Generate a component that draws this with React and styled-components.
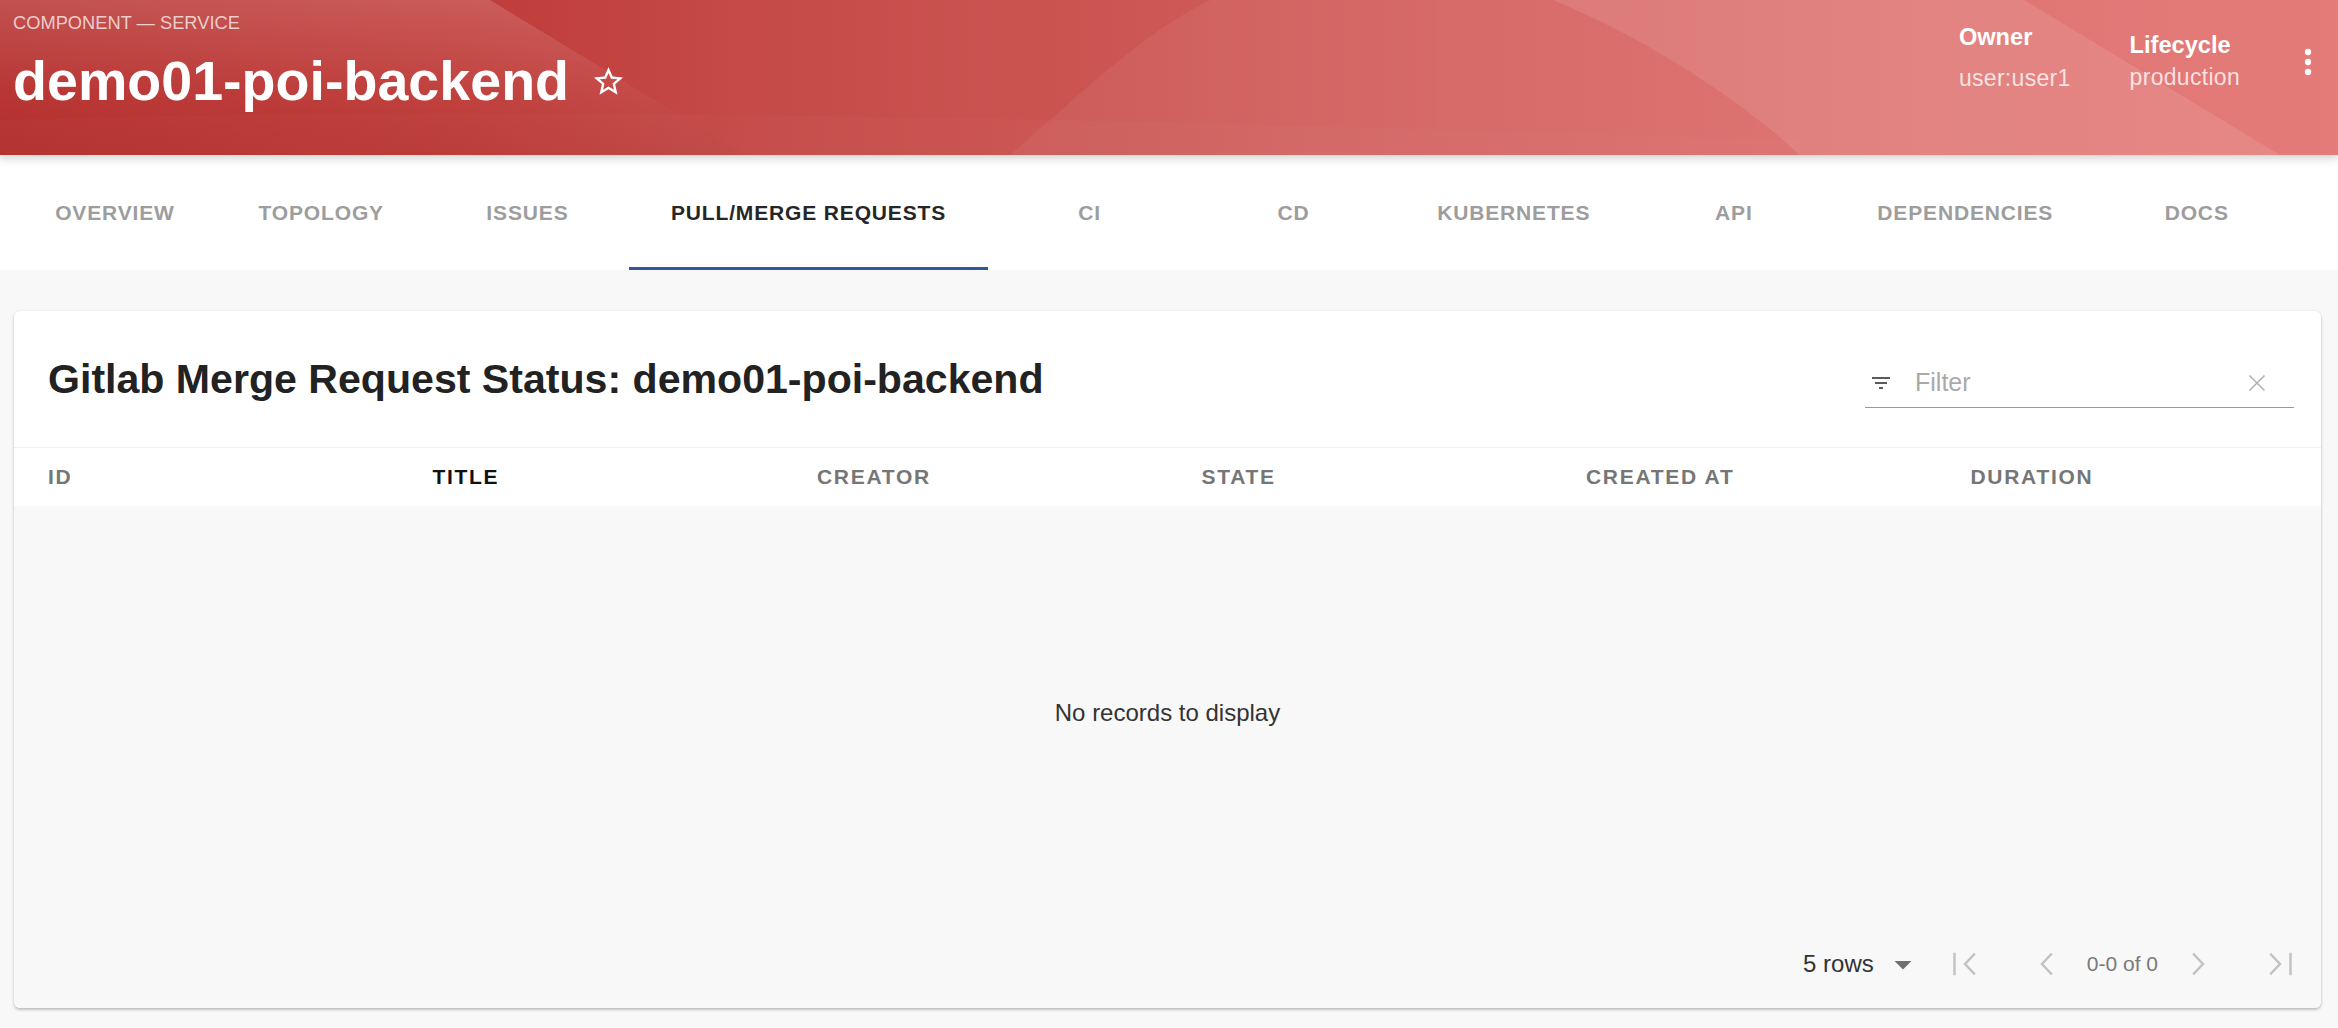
import React from 'react';
import styled, { createGlobalStyle } from 'styled-components';

const GlobalStyle = createGlobalStyle`
  html, body { margin: 0; padding: 0; background: #f8f8f8; }
  body { font-family: "Liberation Sans", Arial, Helvetica, sans-serif; }
  * { box-sizing: border-box; }
`;

const Page = styled.div`
  height: 1028px;
  display: flex;
  flex-direction: column;
  background: #f8f8f8;
  overflow: hidden;
`;

const HeaderBar = styled.header`
  position: relative;
  height: 155px;
  flex: none;
  display: flex;
  align-items: flex-start;
  justify-content: space-between;
  padding: 0 10px 0 13px;
  background: linear-gradient(90deg, #b6302e 0%, #bf3c39 20%, #c54a48 32%, #cc5653 48%, #d4605e 62%, #db6866 80%, #e16d6a 100%);
  box-shadow: 0 0 10px 2px rgba(0, 0, 0, 0.22);
  overflow: hidden;
  z-index: 2;
  color: #fff;
`;

const HeaderArt = styled.svg`
  position: absolute;
  inset: 0;
  width: 100%;
  height: 100%;
  pointer-events: none;
`;

const TitleBlock = styled.div`
  position: relative;
  z-index: 1;
  padding-top: 12px;
`;

const TypeLine = styled.div`
  font-size: 18.3px;
  line-height: 22px;
  color: rgba(255, 255, 255, 0.72);
  text-transform: uppercase;
`;

const TitleRow = styled.div`
  margin-top: 15px;
  display: flex;
  align-items: center;
`;

const Title = styled.h1`
  margin: 0;
  font-size: 55.6px;
  line-height: 64px;
  font-weight: 700;
  color: #fff;
`;

const StarButton = styled.span`
  display: inline-flex;
  margin-left: 22px;
  width: 35px;
  height: 35px;
`;

const MetaRow = styled.div`
  position: relative;
  z-index: 1;
  display: flex;
  align-items: flex-start;
`;

const HeaderLabel = styled.div`
  display: flex;
  flex-direction: column;
  padding-top: ${(p) => p.$top}px;
  margin-right: ${(p) => p.$right}px;
`;

const LabelTitle = styled.span`
  font-size: 23.6px;
  line-height: 27px;
  font-weight: 700;
  color: #fff;
`;

const LabelValue = styled.span`
  margin-top: ${(p) => p.$gap}px;
  font-size: 23px;
  line-height: 27px;
  letter-spacing: 0.3px;
  color: rgba(255, 255, 255, 0.78);
`;

const KebabButton = styled.span`
  display: inline-flex;
  margin-top: 42px;
  margin-left: 48px;
  width: 40px;
  height: 40px;
`;

const TabBar = styled.nav`
  height: 115px;
  flex: none;
  display: flex;
  align-items: stretch;
  padding-left: 13px;
  background: #fff;
`;

const Tab = styled.div`
  position: relative;
  min-width: 204px;
  padding: 0 41.5px;
  display: flex;
  align-items: center;
  justify-content: center;
  font-size: 21px;
  font-weight: 700;
  letter-spacing: 0.85px;
  text-transform: uppercase;
  white-space: nowrap;
  color: ${(p) => (p.$active ? '#262626' : '#9d9d9d')};

  &::after {
    content: '';
    display: ${(p) => (p.$active ? 'block' : 'none')};
    position: absolute;
    left: 0;
    right: 0;
    bottom: 0;
    height: 3px;
    background: #31579a;
  }
`;

const Content = styled.main`
  padding: 41px 17px 0 14px;
`;

const Card = styled.section`
  height: 697px;
  display: flex;
  flex-direction: column;
  background: #fff;
  border-radius: 6px;
  overflow: hidden;
  box-shadow: 0 2px 3px rgba(0, 0, 0, 0.22), 0 0 2px rgba(0, 0, 0, 0.1);
`;

const Toolbar = styled.div`
  height: 136px;
  flex: none;
  display: flex;
  align-items: center;
  justify-content: space-between;
  padding: 0 27px 0 34px;
`;

const CardTitle = styled.h2`
  margin: 0;
  font-size: 41.1px;
  line-height: 48px;
  font-weight: 700;
  color: #222;
`;

const FilterField = styled.label`
  width: 429px;
  height: 50px;
  margin-top: 8px;
  display: flex;
  align-items: center;
  padding: 0 28px 0 4px;
  border-bottom: 1px solid rgba(0, 0, 0, 0.4);
`;

const FilterIconBox = styled.span`
  display: inline-flex;
  width: 24px;
  height: 24px;
  margin-right: 22px;
`;

const FilterInput = styled.input`
  flex: 1;
  min-width: 0;
  border: none;
  outline: none;
  background: transparent;
  font-family: "Liberation Sans", Arial, Helvetica, sans-serif;
  font-size: 25px;
  color: #333;
  padding: 0;

  &::placeholder {
    color: #a9a9a9;
    opacity: 1;
  }
`;

const ClearBox = styled.span`
  display: inline-flex;
  width: 18px;
  height: 18px;
`;

const HeadRow = styled.div`
  height: 59px;
  flex: none;
  display: grid;
  grid-template-columns: repeat(6, 1fr);
  align-items: center;
  border-top: 1px solid #efefef;
  background: #fff;
`;

const HeadCell = styled.div`
  padding-left: 34px;
  font-size: 21px;
  font-weight: 700;
  letter-spacing: 1.7px;
  text-transform: uppercase;
  color: ${(p) => (p.$sorted ? '#111' : '#767676')};
`;

const EmptyBody = styled.div`
  flex: 1;
  display: flex;
  align-items: center;
  justify-content: center;
  background: #f8f8f8;
  font-size: 24px;
  color: #333;
`;

const Footer = styled.div`
  height: 88px;
  flex: none;
  display: flex;
  align-items: center;
  justify-content: flex-end;
  padding-right: 21px;
  background: #f8f8f8;
`;

const RowsSelect = styled.span`
  display: inline-flex;
  align-items: center;
  font-size: 24px;
  color: #333;
`;

const DropArrow = styled.span`
  display: inline-flex;
  width: 30px;
  height: 30px;
  margin-left: 14px;
`;

const PagerButton = styled.span`
  display: inline-flex;
  width: 40px;
  height: 40px;
  margin-left: ${(p) => p.$ml}px;
`;

const PageInfo = styled.span`
  margin: 0 22px;
  font-size: 21px;
  color: #7a7a7a;
`;

const StarIcon = () => (
  <svg viewBox="0 0 24 24" width="35" height="35" fill="#fff">
    <path d="M22 9.24l-7.19-.62L12 2 9.19 8.63 2 9.24l5.46 4.73L5.82 21 12 17.27 18.18 21l-1.63-7.03L22 9.24zM12 15.4l-3.76 2.27 1-4.28-3.32-2.88 4.38-.38L12 6.1l1.71 4.04 4.38.38-3.32 2.88 1 4.28L12 15.4z" />
  </svg>
);

const MoreVertIcon = () => (
  <svg viewBox="0 0 24 24" width="40" height="40" fill="#fff">
    <circle cx="12" cy="6" r="1.9" />
    <circle cx="12" cy="12" r="1.9" />
    <circle cx="12" cy="18" r="1.9" />
  </svg>
);

const FilterListIcon = () => (
  <svg viewBox="0 0 24 24" width="24" height="24" fill="#5a5a5a">
    <path d="M10 18h4v-2h-4v2zM3 6v2h18V6H3zm3 7h12v-2H6v2z" />
  </svg>
);

const ClearIcon = () => (
  <svg viewBox="0 0 18 18" width="18" height="18" fill="none" stroke="#b3b3b3" strokeWidth="1.6">
    <path d="M1.5 1.5L16.5 16.5M16.5 1.5L1.5 16.5" />
  </svg>
);

const ArrowDropDownIcon = () => (
  <svg viewBox="0 0 30 30" width="30" height="30" fill="#707070">
    <path d="M6.5 12h17L15 20.5z" />
  </svg>
);

const pagerStroke = { fill: 'none', stroke: '#c2c2c2', strokeWidth: 2.4, strokeLinecap: 'square' };

const FirstPageIcon = () => (
  <svg viewBox="0 0 40 40" width="40" height="40">
    <path d="M9.5 10v20" {...pagerStroke} />
    <path d="M29 10.5L20 20l9 9.5" {...pagerStroke} />
  </svg>
);

const PrevIcon = () => (
  <svg viewBox="0 0 40 40" width="40" height="40">
    <path d="M26 10.5L17 20l9 9.5" {...pagerStroke} />
  </svg>
);

const NextIcon = () => (
  <svg viewBox="0 0 40 40" width="40" height="40">
    <path d="M14 10.5L23 20l-9 9.5" {...pagerStroke} />
  </svg>
);

const LastPageIcon = () => (
  <svg viewBox="0 0 40 40" width="40" height="40">
    <path d="M11 10.5L20 20l-9 9.5" {...pagerStroke} />
    <path d="M30.5 10v20" {...pagerStroke} />
  </svg>
);

const HeaderShapes = () => (
  <HeaderArt viewBox="0 0 2338 155" preserveAspectRatio="none" aria-hidden="true">
    <defs>
      <linearGradient id="wedge" x1="0" y1="0" x2="0" y2="1">
        <stop offset="0" stopColor="#fff" stopOpacity="0.16" />
        <stop offset="0.6" stopColor="#fff" stopOpacity="0.03" />
        <stop offset="1" stopColor="#000" stopOpacity="0.02" />
      </linearGradient>
      <linearGradient id="band" x1="0" y1="0" x2="1" y2="0">
        <stop offset="0" stopColor="#fff" stopOpacity="0.05" />
        <stop offset="1" stopColor="#fff" stopOpacity="0.1" />
      </linearGradient>
    </defs>
    <path d="M0 0H490L745 155H0Z" fill="url(#wedge)" />
    <path d="M1010 155C1080 95 1140 35 1210 0H2338V155Z" fill="url(#band)" />
    <path d="M1553 0C1650 40 1740 100 1800 155H2280L2024 0Z" fill="#fff" fillOpacity="0.1" />
    <path d="M0 120C500 105 1100 118 1800 140L1800 155H0Z" fill="#fff" fillOpacity="0.02" />
  </HeaderArt>
);

const tabs = ['Overview', 'Topology', 'Issues', 'Pull/Merge Requests', 'CI', 'CD', 'Kubernetes', 'API', 'Dependencies', 'Docs'];
const columns = ['ID', 'Title', 'Creator', 'State', 'Created At', 'Duration'];

export default function App() {
  return (
    <>
      <GlobalStyle />
      <Page>
        <HeaderBar>
          <HeaderShapes />
          <TitleBlock>
            <TypeLine>Component — Service</TypeLine>
            <TitleRow>
              <Title>demo01-poi-backend</Title>
              <StarButton>
                <StarIcon />
              </StarButton>
            </TitleRow>
          </TitleBlock>
          <MetaRow>
            <HeaderLabel $top={24} $right={59}>
              <LabelTitle>Owner</LabelTitle>
              <LabelValue $gap={14}>user:user1</LabelValue>
            </HeaderLabel>
            <HeaderLabel $top={32} $right={0}>
              <LabelTitle>Lifecycle</LabelTitle>
              <LabelValue $gap={5}>production</LabelValue>
            </HeaderLabel>
            <KebabButton>
              <MoreVertIcon />
            </KebabButton>
          </MetaRow>
        </HeaderBar>

        <TabBar>
          {tabs.map((t) => (
            <Tab key={t} $active={t === 'Pull/Merge Requests'}>
              {t}
            </Tab>
          ))}
        </TabBar>

        <Content>
          <Card>
            <Toolbar>
              <CardTitle>Gitlab Merge Request Status: demo01-poi-backend</CardTitle>
              <FilterField>
                <FilterIconBox>
                  <FilterListIcon />
                </FilterIconBox>
                <FilterInput placeholder="Filter" />
                <ClearBox>
                  <ClearIcon />
                </ClearBox>
              </FilterField>
            </Toolbar>
            <HeadRow>
              {columns.map((c) => (
                <HeadCell key={c} $sorted={c === 'Title'}>
                  {c}
                </HeadCell>
              ))}
            </HeadRow>
            <EmptyBody>No records to display</EmptyBody>
            <Footer>
              <RowsSelect>
                5 rows
                <DropArrow>
                  <ArrowDropDownIcon />
                </DropArrow>
              </RowsSelect>
              <PagerButton $ml={27}>
                <FirstPageIcon />
              </PagerButton>
              <PagerButton $ml={40}>
                <PrevIcon />
              </PagerButton>
              <PageInfo>0-0 of 0</PageInfo>
              <PagerButton $ml={0}>
                <NextIcon />
              </PagerButton>
              <PagerButton $ml={40}>
                <LastPageIcon />
              </PagerButton>
            </Footer>
          </Card>
        </Content>
      </Page>
    </>
  );
}
